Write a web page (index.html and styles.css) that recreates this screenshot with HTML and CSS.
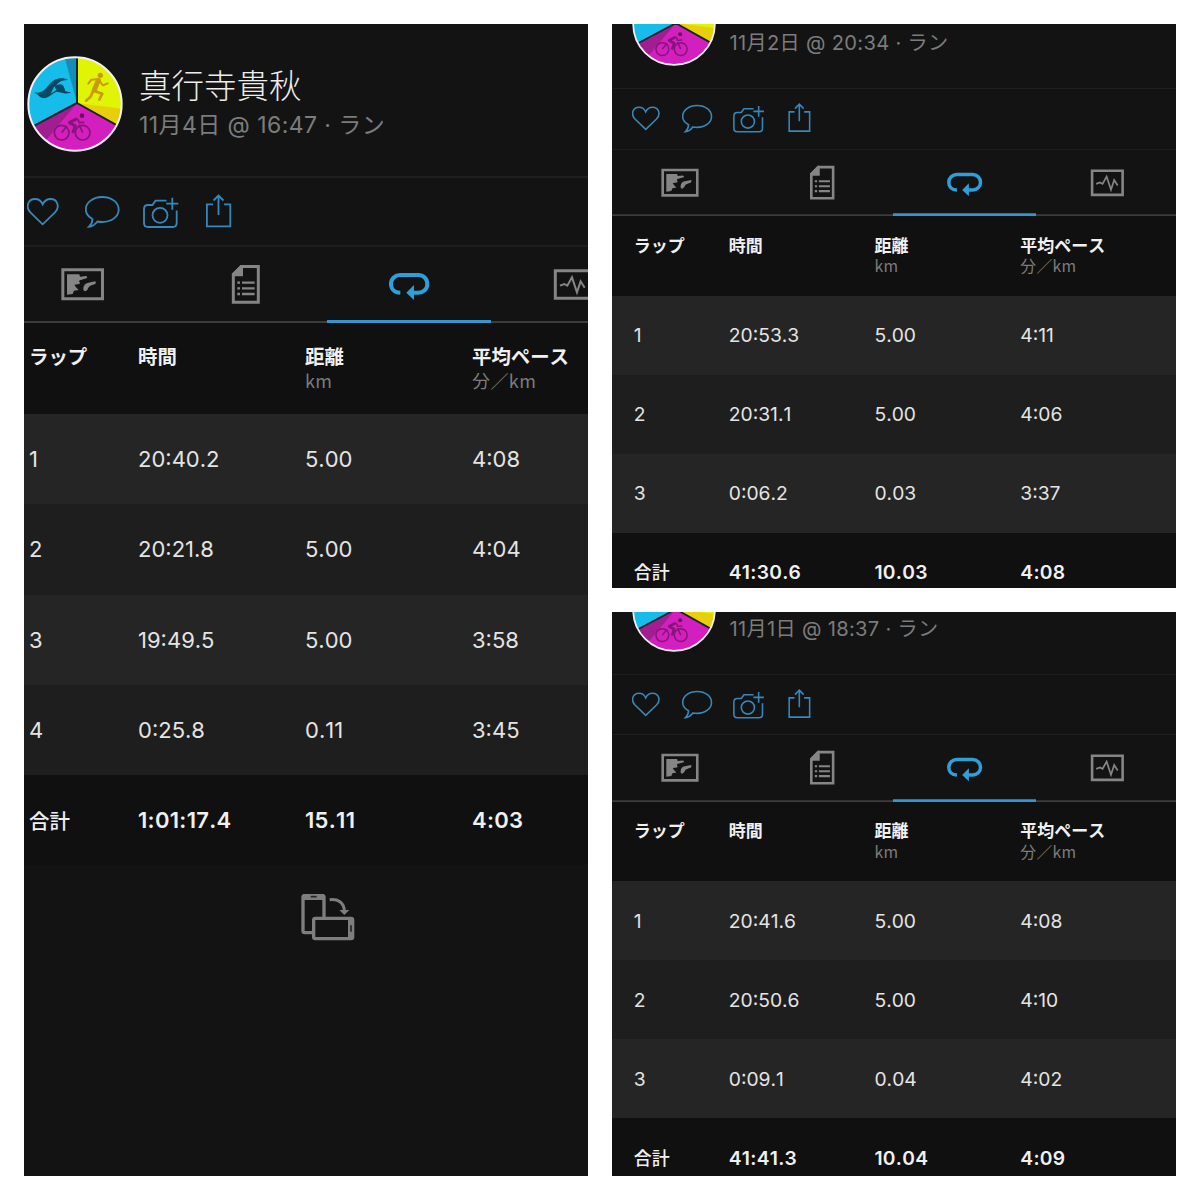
FILE: index.html
```
<!DOCTYPE html>
<html lang="ja">
<head>
<meta charset="utf-8">
<title>ラップ</title>
<link rel="stylesheet" href="styles.css">
</head>
<body>
<svg class="defs" aria-hidden="true">
  <symbol id="avatar" viewBox="9 47 288 288">
    <clipPath id="disc"><circle cx="153" cy="191" r="140"/></clipPath>
    <g clip-path="url(#disc)">
      <path d="M159 188V40H0V272Z" fill="#16bdea"/>
      <path d="M159 188V40H119Z" fill="#168db8"/>
      <path d="M159 188V40H310V272Z" fill="#e0f505"/>
      <path d="M159 188L310 207V275Z" fill="#e8cf0b"/>
      <path d="M159 188L0 273V350H310V272Z" fill="#d21fbd"/>
      <path d="M159 188L20 262L57 310Z" fill="#a01e91"/>
      <path d="M159 40V188L20 262M159 188L300 267" fill="none" stroke="#14242c" stroke-width="6"/>
      <path d="M31 156C50 160 62 151 74 134C87 116 112 107 133 119C112 118 101 127 97 136C110 130 123 138 124 153C130 155 136 156 142 156C128 163 117 158 104 154C86 153 75 177 54 173C47 171 43 164 31 156Z" fill="#064a63"/>
      <circle cx="108" cy="144" r="12" fill="#064a63"/>
      <path d="M97 149L80 160L91 138Z" fill="#16bdea"/>
      <g fill="none" stroke="#c99a0c" stroke-linecap="round" stroke-linejoin="round">
        <path d="M223 120L211 149" stroke-width="15"/>
        <path d="M218 117L202 118L193 130M228 124L237 135L251 129" stroke-width="6"/>
        <path d="M209 151L235 160L226 178M207 152L200 169L186 181" stroke-width="8"/>
      </g>
      <circle cx="229" cy="105" r="8" fill="#c99a0c"/>
      <g fill="none" stroke="#861479" stroke-width="5" stroke-linejoin="round">
        <circle cx="113" cy="277" r="22"/><circle cx="176" cy="277" r="22"/>
        <path d="M113 277L129 257M165 253L176 277"/>
        <path d="M159 235L136 247L154 257L146 278" stroke-width="9"/>
        <path d="M160 235L166 247L181 246"/>
      </g>
      <circle cx="174" cy="226" r="7" fill="#6d1062"/>
    </g>
    <circle cx="153" cy="191" r="140" fill="none" stroke="#f4eff5" stroke-width="6"/>
  </symbol>

  <symbol id="heart" viewBox="0 0 58 69">
    <path d="M15.7 47.3L3.4 35.4C-1.8 30 1 22 8 22C12 22 14.5 24.5 15.7 27.3C17 24.5 19.5 22 23.5 22C30.5 22 33.3 30 28 35.4Z"/>
  </symbol>
  <symbol id="bubble" viewBox="0 0 58 69">
    <path d="M7.5 42C3 39.5.8 36.5.8 32.5C.8 25.5 8 20 17.3 20C26.7 20 33.7 25.5 33.7 32.5C33.7 39.5 26.7 45 17.3 45C15.6 45 14 44.8 12.4 44.5C10.5 47 7.5 49.6 4 49.8C6.3 47.8 7.3 45 7.5 42Z"/>
  </symbol>
  <symbol id="camera" viewBox="0 0 58 69">
    <path d="M23.5 23.7H12.5L9.5 28H5Q1 28 1 32V46Q1 50 5 50H29.7Q33.7 50 33.7 46V33.5M29.3 20.7V32.7M23.3 26.7H35.3"/>
    <circle cx="17" cy="38.3" r="7.5"/>
  </symbol>
  <symbol id="share" viewBox="0 0 58 69">
    <path d="M12 27.3H5.9V49.3H29.3V27.3H23M17.5 38V18.5M12.5 23.5L17.5 18.5L22.5 23.5"/>
  </symbol>

  <symbol id="map" viewBox="0 0 164 76">
    <g transform="translate(21 3) scale(.3333)">
      <path d="M128.500 59.500H247.500V146.500H128.500Z" fill="none" stroke="currentColor" stroke-width="9"/>
      <path d="M141 73H178L180 80L198 78Q204 80 201 84L185 89Q177 90 177 94L180 98L178 102L163 104L168 112L176 120L162 122L158 132L141 134Z" fill="currentColor"/>
      <path d="M190 118Q190 100 205 98L226 94Q229 96 226 102Q212 106 207 110Q203 121 196 124Q190 124 190 118Z" fill="currentColor"/>
    </g>
  </symbol>
  <symbol id="doc" viewBox="0 0 164 76">
    <g transform="translate(-143 3) scale(.3333)">
      <path d="M664 49.500H715V156.500H640V73Z" fill="none" stroke="currentColor" stroke-width="9"/>
      <path d="M662 45H669V79H636V71Z" fill="currentColor"/>
      <path d="M652 98H660M666 98H704M652 115H660M666 115H704M652 132H660M666 132H704" stroke="currentColor" stroke-width="7"/>
    </g>
  </symbol>
  <symbol id="lap" viewBox="0 0 164 76">
    <g transform="translate(-17 3) scale(.3333)">
      <path d="M271 128C253 128 243 116 243 102C243 86 256 75 270 75H325C340 75 352 86 352 102C352 117 340 128 325 128H308" fill="none" stroke="currentColor" stroke-width="12"/>
      <path d="M289 128L312 105V150Z" fill="currentColor"/>
    </g>
  </symbol>
  <symbol id="chart" viewBox="0 0 164 76">
    <g transform="translate(-181 3) scale(.3333)" fill="none" stroke="currentColor">
      <path d="M736 62H841V145H736Z" stroke-width="9"/>
      <path d="M750 107L763 102L772 107L786 82L801 127L812 94L824 113" stroke-width="6"/>
    </g>
  </symbol>
  <symbol id="rotate" viewBox="0 0 240 210">
    <rect x="39" y="47" width="63" height="111" rx="5" fill="none" stroke="#7e7e7e" stroke-width="10"/>
    <path d="M39 51H102" stroke="#7e7e7e" stroke-width="18"/>
    <path d="M62 50H80" stroke="#252525" stroke-width="5"/>
    <rect x="71" y="115" width="117" height="61" rx="5" fill="#131313" stroke="#7e7e7e" stroke-width="10"/>
    <path d="M183 115V176" stroke="#7e7e7e" stroke-width="18"/>
    <path d="M183 136V155" stroke="#252525" stroke-width="5"/>
    <path d="M119 59C144 56 162 67 163 93" fill="none" stroke="#7e7e7e" stroke-width="9"/>
    <path d="M148 90H178L163 105Z" fill="#7e7e7e"/>
  </symbol>
</svg>

<main class="collage">
  <section class="panel panel-tall">
    <div class="screen">
      <header class="profile">
        <svg class="avatar"><use href="#avatar"/></svg>
        <div class="who"><div class="name">真行寺貴秋</div><div class="date">11月4日 @ 16:47 · ラン</div></div>
      </header>
      <nav class="actions"><svg><use href="#heart"/></svg><svg><use href="#bubble"/></svg><svg><use href="#camera"/></svg><svg><use href="#share"/></svg></nav>
      <nav class="tabs"><svg><use href="#map"/></svg><svg><use href="#doc"/></svg><svg class="active"><use href="#lap"/></svg><svg><use href="#chart"/></svg></nav>
      <div class="row head"><span>ラップ</span><span>時間</span><span>距離<small>km</small></span><span>平均ペース<small>分／km</small></span></div>
      <div class="row odd"><span>1</span><span>20:40.2</span><span>5.00</span><span>4:08</span></div>
      <div class="row even"><span>2</span><span>20:21.8</span><span>5.00</span><span>4:04</span></div>
      <div class="row odd"><span>3</span><span>19:49.5</span><span>5.00</span><span>3:58</span></div>
      <div class="row even"><span>4</span><span>0:25.8</span><span>0.11</span><span>3:45</span></div>
      <div class="row total"><span class="label">合計</span><span>1:01:17.4</span><span>15.11</span><span>4:03</span></div>
      <svg class="rotate"><use href="#rotate"/></svg>
    </div>
  </section>

  <section class="panel panel-small">
    <div class="screen">
      <header class="profile">
        <svg class="avatar"><use href="#avatar"/></svg>
        <div class="who"><div class="date">11月2日 @ 20:34 · ラン</div></div>
      </header>
      <nav class="actions"><svg><use href="#heart"/></svg><svg><use href="#bubble"/></svg><svg><use href="#camera"/></svg><svg><use href="#share"/></svg></nav>
      <nav class="tabs"><svg><use href="#map"/></svg><svg><use href="#doc"/></svg><svg class="active"><use href="#lap"/></svg><svg><use href="#chart"/></svg></nav>
      <div class="row head"><span>ラップ</span><span>時間</span><span>距離<small>km</small></span><span>平均ペース<small>分／km</small></span></div>
      <div class="row odd"><span>1</span><span>20:53.3</span><span>5.00</span><span>4:11</span></div>
      <div class="row even"><span>2</span><span>20:31.1</span><span>5.00</span><span>4:06</span></div>
      <div class="row odd"><span>3</span><span>0:06.2</span><span>0.03</span><span>3:37</span></div>
      <div class="row total"><span class="label">合計</span><span>41:30.6</span><span>10.03</span><span>4:08</span></div>
    </div>
  </section>

  <section class="panel panel-small panel-last">
    <div class="screen">
      <header class="profile">
        <svg class="avatar"><use href="#avatar"/></svg>
        <div class="who"><div class="date">11月1日 @ 18:37 · ラン</div></div>
      </header>
      <nav class="actions"><svg><use href="#heart"/></svg><svg><use href="#bubble"/></svg><svg><use href="#camera"/></svg><svg><use href="#share"/></svg></nav>
      <nav class="tabs"><svg><use href="#map"/></svg><svg><use href="#doc"/></svg><svg class="active"><use href="#lap"/></svg><svg><use href="#chart"/></svg></nav>
      <div class="row head"><span>ラップ</span><span>時間</span><span>距離<small>km</small></span><span>平均ペース<small>分／km</small></span></div>
      <div class="row odd"><span>1</span><span>20:41.6</span><span>5.00</span><span>4:08</span></div>
      <div class="row even"><span>2</span><span>20:50.6</span><span>5.00</span><span>4:10</span></div>
      <div class="row odd"><span>3</span><span>0:09.1</span><span>0.04</span><span>4:02</span></div>
      <div class="row total"><span class="label">合計</span><span>41:41.3</span><span>10.04</span><span>4:09</span></div>
    </div>
  </section>
</main>
</body>
</html>
```
FILE: styles.css
```
* { box-sizing: border-box; }
body {
  margin: 0;
  background: #fff;
  font-family: Inter, "Noto Sans CJK JP", sans-serif;
  color: #e4e4e4;
}
.defs { position: absolute; width: 0; height: 0; }
.collage {
  display: grid;
  grid-template: 564px 564px / 564px 564px;
  gap: 24px;
  padding: 24px;
  width: 1200px;
  height: 1200px;
}
.panel { background: #131313; overflow: hidden; }
.panel-tall { grid-row: span 2; }
.screen { width: 656px; margin-left: -25px; }
.panel-small .screen { zoom: .8755; margin: -79.6px 0 0 -5.7px; }
.panel-last .screen { margin-top: -82.4px; }

.profile {
  display: flex;
  gap: 16px;
  height: 154px;
  padding: 32px 0 0 28px;
  border-bottom: 2px solid #1e1e1e;
}
.avatar { width: 96px; height: 96px; flex: none; }
.who { padding-top: 6px; white-space: nowrap; }
.name { font: 300 32.5px/43px "Noto Sans CJK JP", sans-serif; color: #ededed; }
.date { padding-top: 2px; font-size: 23px; line-height: 36px; letter-spacing: .43px; color: #7c7c7c; }
.panel-small .who { padding-top: 49px; }
.panel-small .date { letter-spacing: .36px; }

.actions { display: flex; height: 69px; padding-left: 28px; border-bottom: 2px solid #1e1e1e; }
.actions svg { width: 58px; height: 69px; margin-top: -1px; flex: none; overflow: visible; fill: none; stroke: #3688bb; stroke-width: 1.8; }

.tabs { display: flex; height: 76px; color: #858585; box-shadow: inset 0 -2px #3c3c3c; }
.tabs svg { width: 164px; height: 76px; flex: none; }
.panel-small .tabs svg { width: 163.4px; }
.tabs .active { color: #2f9fdb; box-shadow: inset 0 -3px #3595cf; }

.row {
  display: grid;
  grid-template-columns: 109px 167px 167px 1fr;
  align-items: center;
  height: 90.25px;
  padding-left: 30px;
  font-size: 22px;
  font-kerning: none;
  white-space: nowrap;
}
.panel-small .row { grid-template-columns: 108.6px 166.4px 166.6px 1fr; padding-left: 30.5px; }
.odd { background: #252525; }
.even { background: #1e1e1e; }
.total { background: #101010; font-weight: 600; letter-spacing: .3px; color: #f0f0f0; }
.total .label { padding-top: 3px; font-size: 20.5px; line-height: 26px; font-weight: 500; letter-spacing: 0; }
.head, .panel-small .head {
  height: 91px;
  align-items: start;
  padding-top: 20px;
  background: #101010;
  font: 700 19.4px/26px "Noto Sans CJK JP", sans-serif;
  font-kerning: none;
  color: #f0f0f0;
}
.head small { display: block; font-size: 18px; line-height: 22px; letter-spacing: .4px; font-weight: 400; color: #7c7c7c; }
.rotate { display: block; width: 80px; height: 70px; margin: 15px 0 0 291px; }
```
